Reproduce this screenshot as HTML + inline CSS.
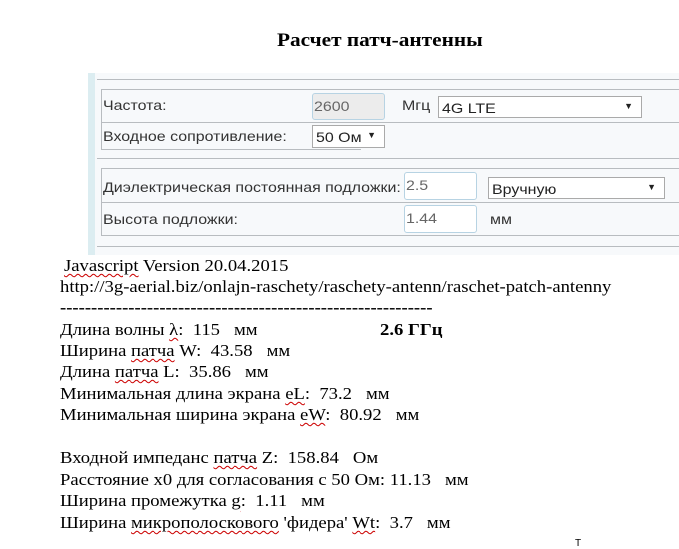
<!DOCTYPE html>
<html><head><meta charset="utf-8"><style>
body{margin:0;width:679px;height:549px;background:#fff;position:relative;overflow:hidden;font-family:"Liberation Serif",serif;}
.a{position:absolute;white-space:nowrap;}
.x{display:inline-block;transform:scaleX(1.14);transform-origin:0 0;}
.s{font-family:"Liberation Sans",sans-serif;font-size:14px;color:#333;}
.l{position:absolute;background:#b8bcc0;}
.in{position:absolute;box-sizing:border-box;border:1px solid #b7d3e3;border-radius:3px;background:#fff;font-family:"Liberation Sans",sans-serif;font-size:14px;color:#666;padding:4px 0 0 1px;white-space:nowrap;}
.sel{position:absolute;box-sizing:border-box;border:1px solid #aaa;background:#fff;font-family:"Liberation Sans",sans-serif;font-size:14px;color:#222;padding:3px 0 0 3px;white-space:nowrap;}
.sel b{position:absolute;right:8px;top:4px;font-size:9px;font-weight:normal;}
.t{position:absolute;left:60px;font-size:16.5px;color:#000;white-space:nowrap;transform:scaleX(1.13);transform-origin:0 0;}
u{text-decoration:underline wavy #c00;text-decoration-thickness:1px;text-underline-offset:2px}
</style></head><body>
<div class="a" style="left:277px;top:30px;font-size:19px;font-weight:bold;"><span class="x" style="transform:scaleX(1.12)">Расчет патч-антенны</span></div>
<div class="a" style="left:88px;top:73px;width:591px;height:182px;background:#f7f9fb;"></div>
<div class="a" style="left:88px;top:73px;width:7px;height:182px;background:#dcedf1;"></div>
<div class="l" style="left:97px;top:79px;width:582px;height:1px"></div>
<div class="l" style="left:101px;top:89px;width:578px;height:1px"></div>
<div class="l" style="left:101px;top:89px;width:1px;height:61px"></div>
<div class="l" style="left:101px;top:122px;width:578px;height:1px"></div>
<div class="l" style="left:101px;top:149px;width:260px;height:1px"></div>
<div class="l" style="left:97px;top:158px;width:582px;height:1px"></div>
<div class="l" style="left:101px;top:168px;width:578px;height:1px"></div>
<div class="l" style="left:101px;top:168px;width:1px;height:68px"></div>
<div class="l" style="left:101px;top:202px;width:578px;height:1px"></div>
<div class="l" style="left:101px;top:235px;width:578px;height:1px"></div>
<div class="l" style="left:97px;top:246px;width:582px;height:1px"></div>
<div class="a s" style="left:103px;top:97px"><span class="x">Частота:</span></div>
<div class="in" style="left:312px;top:93px;width:73px;height:27px;background:#ececec;"><span class="x">2600</span></div>
<div class="a s" style="left:402px;top:97px"><span class="x">Мгц</span></div>
<div class="sel" style="left:438px;top:96px;width:204px;height:22px;"><span class="x">4G LTE</span><b>▼</b></div>
<div class="a s" style="left:103px;top:128px"><span class="x">Входное сопротивление:</span></div>
<div class="sel" style="left:312px;top:125px;width:73px;height:23px;"><span class="x">50 Ом</span><b>▼</b></div>
<div class="a s" style="left:103px;top:179px"><span class="x">Диэлектрическая постоянная подложки:</span></div>
<div class="in" style="left:404px;top:172px;width:73px;height:28px;"><span class="x">2.5</span></div>
<div class="sel" style="left:488px;top:177px;width:177px;height:22px;"><span class="x">Вручную</span><b>▼</b></div>
<div class="a s" style="left:103px;top:211px"><span class="x">Высота подложки:</span></div>
<div class="in" style="left:404px;top:205px;width:73px;height:28px;"><span class="x">1.44</span></div>
<div class="a s" style="left:490px;top:211px"><span class="x">мм</span></div>
<div class="t" style="left:64px;top:256px"><u>Javascript</u> Version 20.04.2015</div>
<div class="t" style="top:277px">http://3g-aerial.biz/onlajn-raschety/raschety-antenn/raschet-patch-antenny</div>
<div class="t" style="top:298px;font-weight:bold;">------------------------------------------------------------</div>
<div class="t" style="top:320px">Длина волны <u>λ</u>:&nbsp; 115&nbsp;&nbsp; мм</div>
<div class="t" style="left:380px;top:320px;font-weight:bold">2.6 ГГц</div>
<div class="t" style="top:341px">Ширина <u>патча</u> W:&nbsp; 43.58&nbsp;&nbsp; мм</div>
<div class="t" style="top:362px">Длина <u>патча</u> L:&nbsp; 35.86&nbsp;&nbsp; мм</div>
<div class="t" style="top:384px">Минимальная длина экрана <u>eL</u>:&nbsp; 73.2&nbsp;&nbsp; мм</div>
<div class="t" style="top:405px">Минимальная ширина экрана <u>eW</u>:&nbsp; 80.92&nbsp;&nbsp; мм</div>
<div class="t" style="top:448px">Входной импеданс <u>патча</u> Z:&nbsp; 158.84&nbsp;&nbsp; Ом</div>
<div class="t" style="top:470px">Расстояние x0 для согласования с 50 Ом: 11.13&nbsp;&nbsp; мм</div>
<div class="t" style="top:491px">Ширина промежутка <u>g</u>:&nbsp; 1.11&nbsp;&nbsp; мм</div>
<div class="t" style="top:513px">Ширина <u>микрополоскового</u> 'фидера' <u>Wt</u>:&nbsp; 3.7&nbsp;&nbsp; мм</div>
<div class="a" style="left:575px;top:538px;font-size:10px;font-family:'Liberation Sans',sans-serif">T</div>
</body></html>
